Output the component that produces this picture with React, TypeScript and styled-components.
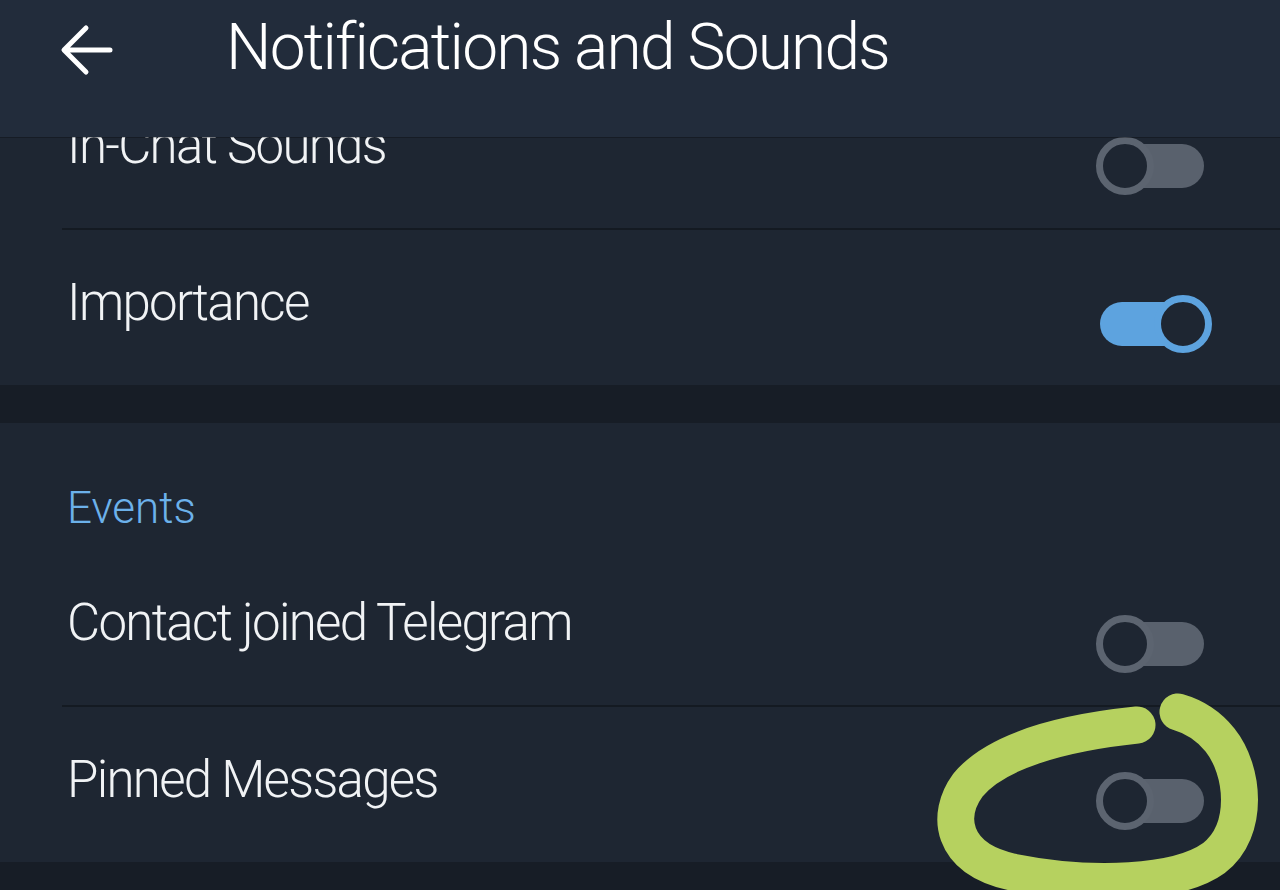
import styled, { createGlobalStyle } from 'styled-components';

const GlobalStyle = createGlobalStyle`
  html, body {
    margin: 0;
    padding: 0;
    background: #171d26;
  }
  * {
    box-sizing: border-box;
  }
`;

const Screen = styled.div`
  position: relative;
  width: 1280px;
  height: 890px;
  overflow: hidden;
  background: #171d26;
  font-family: Roboto, 'Noto Sans', sans-serif;
  color: #f1f3f5;
`;

const Header = styled.header`
  position: absolute;
  top: 0;
  left: 0;
  right: 0;
  height: 137px;
  z-index: 2;
  display: flex;
  align-items: flex-start;
  padding: 6px 0 0 50px;
  background: #222c3b;
  box-shadow: 0 1px 0 rgba(0, 0, 0, 0.25);
`;

const BackButton = styled.button`
  display: flex;
  align-items: center;
  justify-content: center;
  width: 72px;
  height: 88px;
  padding: 0;
  border: none;
  background: none;
  color: #ffffff;
  cursor: pointer;
`;

const Title = styled.h1`
  margin: 0 0 0 104px;
  font-size: 64px;
  font-weight: 300;
  letter-spacing: -1.8px;
  line-height: 84px;
  color: #ffffff;
  white-space: nowrap;
`;

const Content = styled.main`
  padding-top: 72px;
`;

const Section = styled.section`
  background: #1e2632;
`;

const Gap = styled.div`
  height: 38px;
  background: #171d26;
`;

const SectionTitle = styled.div`
  height: 127px;
  display: flex;
  align-items: center;
  padding: 43px 0 0 67px;
  font-size: 44px;
  font-weight: 300;
  color: #6cb1ea;
`;

const Row = styled.div<{ $height: number }>`
  height: ${(p) => p.$height}px;
  display: flex;
  align-items: center;
  justify-content: space-between;
  padding: 0 76px 0 67px;
`;

const Label = styled.span`
  margin-bottom: 10px;
  font-size: 51px;
  font-weight: 300;
  letter-spacing: -1.7px;
  color: #f1f3f5;
  white-space: nowrap;
`;

const Divider = styled.div`
  height: 2px;
  margin-left: 62px;
  background: #141a22;
`;

const Track = styled.div<{ $on: boolean }>`
  position: relative;
  width: 104px;
  height: 44px;
  margin-top: 32px;
  border-radius: 22px;
  background: ${(p) => (p.$on ? '#5da3df' : '#59616d')};
`;

const Knob = styled.span<{ $on: boolean }>`
  position: absolute;
  top: -7px;
  left: ${(p) => (p.$on ? '54px' : '-4px')};
  width: 58px;
  height: 58px;
  border-radius: 50%;
  border: 7px solid ${(p) => (p.$on ? '#5da3df' : '#5c6470')};
  background: #1e2632;
`;

const Annotation = styled.svg`
  position: absolute;
  top: 0;
  left: 0;
  z-index: 3;
  pointer-events: none;
`;

function Toggle({ on }: { on: boolean }) {
  return (
    <Track $on={on}>
      <Knob $on={on} />
    </Track>
  );
}

function BackArrow() {
  return (
    <svg width="56" height="52" viewBox="0 0 56 52" fill="none">
      <path
        d="M52 26H7M28 4L6 26L28 48"
        stroke="currentColor"
        strokeWidth="5"
        strokeLinecap="round"
        strokeLinejoin="round"
      />
    </svg>
  );
}

export default function App() {
  return (
    <>
      <GlobalStyle />
      <Screen>
        <Header>
          <BackButton aria-label="Back">
            <BackArrow />
          </BackButton>
          <Title>Notifications and Sounds</Title>
        </Header>

        <Content>
          <Section>
            <Row $height={156}>
              <Label>In-Chat Sounds</Label>
              <Toggle on={false} />
            </Row>
            <Divider />
            <Row $height={155}>
              <Label>Importance</Label>
              <Toggle on />
            </Row>
          </Section>
          <Gap />
          <Section>
            <SectionTitle>Events</SectionTitle>
            <Row $height={155}>
              <Label>Contact joined Telegram</Label>
              <Toggle on={false} />
            </Row>
            <Divider />
            <Row $height={155}>
              <Label>Pinned Messages</Label>
              <Toggle on={false} />
            </Row>
          </Section>
        </Content>

        <Annotation width="1280" height="890" viewBox="0 0 1280 890">
          <path
            d="M1137 725 C1060 733 995 752 968 785 C946 815 950 858 1012 872 C1092 888 1178 884 1214 858 C1250 830 1244 770 1220 740 C1208 725 1192 716 1178 712"
            stroke="#b6d15f"
            strokeWidth="37"
            strokeLinecap="round"
            strokeLinejoin="round"
            fill="none"
          />
        </Annotation>
      </Screen>
    </>
  );
}
